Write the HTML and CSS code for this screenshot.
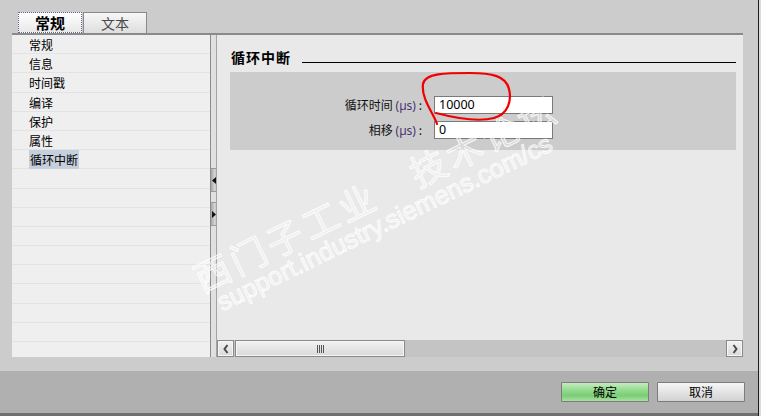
FILE: index.html
```html
<!DOCTYPE html>
<html lang="zh">
<head>
<meta charset="utf-8">
<title>循环中断</title>
<link rel="stylesheet" href="styles.css">
</head>
<body>
<div class="window">
  <div class="main">
    <div class="tabs">
      <div class="tab active"><span class="tab-label">常规</span></div>
      <div class="tab"><span class="tab-label">文本</span></div>
    </div>
    <div class="panel">
      <ul class="nav">
        <li>常规</li>
        <li>信息</li>
        <li>时间戳</li>
        <li>编译</li>
        <li>保护</li>
        <li>属性</li>
        <li class="sel"><span>循环中断</span></li>
        <li></li><li></li><li></li><li></li><li></li><li></li><li></li><li></li><li></li><li></li>
      </ul>
      <div class="splitter">
        <div class="split-btn"><svg width="4" height="7" viewBox="0 0 4 7"><path d="M4 0 L0 3.5 L4 7 Z" fill="#111"/></svg></div>
        <div class="split-btn"><svg width="4" height="7" viewBox="0 0 4 7"><path d="M0 0 L4 3.5 L0 7 Z" fill="#111"/></svg></div>
      </div>
      <div class="content">
        <div class="scroll-area">
          <div class="title-row">
            <h2 class="title">循环中断</h2>
            <div class="rule"></div>
          </div>
          <div class="box">
            <div class="form">
              <div class="label">循环时间 <span class="unit">(µs)</span> :</div>
              <div class="input">10000</div>
              <div class="label">相移 <span class="unit">(µs)</span> :</div>
              <div class="input">0</div>
            </div>
          </div>
        </div>
        <div class="hscroll">
          <div class="sb-btn"><svg width="8" height="10" viewBox="0 0 8 10"><path d="M5.5 1 L2.5 5 L5.5 9" fill="none" stroke="#4a4a4a" stroke-width="2"/></svg></div>
          <div class="thumb"><span class="grip"></span></div>
          <div class="track"></div>
          <div class="sb-btn"><svg width="8" height="10" viewBox="0 0 8 10"><path d="M2.5 1 L5.5 5 L2.5 9" fill="none" stroke="#4a4a4a" stroke-width="2"/></svg></div>
        </div>
      </div>
    </div>
  </div>
  <div class="footer">
    <button class="btn ok">确定</button>
    <button class="btn">取消</button>
  </div>
</div>

<div class="watermark">
  <div class="wm-cn">西门子工业　技术论坛</div>
  <div class="wm-url">support.industry.siemens.com/cs</div>
</div>

<svg class="annot" width="761" height="416" viewBox="0 0 761 416">
  <path d="M437 124 C434 114 421 99 423 84 C425 73 446 73 470 73 C492 73 506 76 509 89 C512 101 508 114 494 118 C479 122 455 118 436 113" fill="none" stroke="#f00000" stroke-width="2.2" stroke-linecap="round"/>
</svg>
</body>
</html>
```

FILE: styles.css
```css
html, body {
  margin: 0;
  padding: 0;
}

body {
  width: 761px;
  height: 416px;
  overflow: hidden;
  background: #dcdcdc;
  font-family: "Noto Sans CJK SC", "Noto Sans", sans-serif;
  position: relative;
}

.window {
  width: 758px;
  height: 416px;
  border-right: 1px solid #1c1c1c;
  background: #cccccc;
  display: flex;
  flex-direction: column;
}

.main {
  height: 371px;
  padding: 12px 0 0 12px;
  box-sizing: border-box;
}

.tabs {
  display: flex;
  gap: 1px;
  margin-left: 6px;
  height: 21px;
}

.tab {
  width: 64px;
  height: 21px;
  box-sizing: border-box;
  border: 1px solid #8a8a8a;
  border-bottom: none;
  background: linear-gradient(#f7f7f7, #dedede);
  display: flex;
  align-items: center;
  justify-content: center;
}

.tab-label {
  font-size: 14px;
  line-height: 16px;
  color: #4a4a4a;
}

.tab.active {
  border: 1px dotted #5e6a88;
  background: linear-gradient(#ffffff, #e8e8e8);
}

.tab.active .tab-label {
  color: #000;
  font-weight: bold;
  font-size: 15px;
}

.panel {
  width: 731px;
  height: 324px;
  box-sizing: border-box;
  border-top: 2px solid #8a8a8a;
  display: flex;
}

.nav {
  width: 198px;
  margin: 0;
  padding: 0;
  list-style: none;
  background: #efefef;
  overflow: hidden;
}

.nav li {
  height: 19.2px;
  box-sizing: border-box;
  border-bottom: 1px solid #e3e3e3;
  padding: 1px 0 0 17px;
  font-size: 12px;
  line-height: 18px;
  color: #000;
}

.nav li.sel span {
  background: #c5d0dc;
  padding: 1px 1px;
}

.splitter {
  width: 7px;
  box-sizing: border-box;
  border-left: 1px solid #8c8c8c;
  border-right: 1px solid #a4a4a4;
  background: #e0e0e0;
  display: flex;
  flex-direction: column;
  gap: 10px;
  padding-top: 133px;
}

.split-btn {
  height: 24px;
  box-sizing: border-box;
  border-top: 1px solid #9a9a9a;
  border-bottom: 1px solid #9a9a9a;
  background: linear-gradient(90deg, #a6a6a6, #d2d2d2 70%, #c8c8c8);
  display: flex;
  align-items: center;
  padding-left: 1px;
}

.split-btn svg {
  display: block;
}

.content {
  flex: 1;
  display: flex;
  flex-direction: column;
  background: #e9e9e9;
}

.scroll-area {
  flex: 1;
  padding-left: 13px;
}

.title-row {
  display: flex;
  margin-top: 12px;
  height: 20px;
}

.title {
  margin: 0 0 0 1px;
  font-size: 14px;
  line-height: 20px;
  letter-spacing: 1px;
  font-weight: bold;
  color: #000;
}

.rule {
  flex: 1;
  height: 1px;
  background: #000;
  margin: 15px 7px 0 11px;
}

.box {
  width: 506px;
  height: 78px;
  margin-top: 5px;
  background: #cccccc;
  box-sizing: border-box;
  padding-top: 24px;
}

.form {
  display: grid;
  grid-template-columns: 192px 119px;
  column-gap: 12px;
  row-gap: 6px;
}

.label {
  text-align: right;
  font-size: 12px;
  line-height: 18px;
  color: #111;
}

.unit {
  font-family: "Noto Sans", sans-serif;
  color: #4a3472;
}

.input {
  height: 18px;
  box-sizing: border-box;
  border: 1px solid #7a7a7a;
  background: #fff;
  font-family: "Noto Sans", sans-serif;
  font-size: 12.5px;
  line-height: 16px;
  padding-left: 4px;
  color: #000;
}

.hscroll {
  height: 17px;
  background: #c4c4c4;
  display: flex;
}

.sb-btn, .thumb {
  box-sizing: border-box;
  border: 1px solid #8a8a8a;
  box-shadow: inset 0 0 0 1px #f6f6f6;
  background: linear-gradient(#f2f2f2, #dadada);
  display: flex;
  align-items: center;
  justify-content: center;
}

.sb-btn {
  width: 17px;
}

.thumb {
  width: 170px;
  margin-left: 1px;
}

.grip {
  width: 7px;
  height: 8px;
  background: repeating-linear-gradient(90deg, #555 0 1px, transparent 1px 2px);
}

.track {
  flex: 1;
}

.footer {
  height: 45px;
  box-sizing: border-box;
  background: #b0b0b0;
  border-bottom: 3px solid #707070;
  display: flex;
  justify-content: flex-end;
  gap: 8px;
  padding: 11px 13px 0 0;
}

.btn {
  width: 88px;
  height: 20px;
  box-sizing: border-box;
  border: 1px solid #7c7c7c;
  border-radius: 1px;
  background: linear-gradient(#f6f6f6, #e4e4e4 50%, #d2d2d2);
  font-family: "Noto Sans CJK SC", sans-serif;
  font-size: 12px;
  line-height: 16px;
  color: #000;
  padding: 0;
}

.btn.ok {
  background: linear-gradient(#c4ecbe, #8fd889 45%, #7ccc76 70%, #a6e2a0);
}

.watermark {
  position: absolute;
  left: 187px;
  top: 262px;
  transform-origin: 0 0;
  transform: rotate(-26deg);
  pointer-events: none;
  color: rgba(255, 255, 255, 0.3);
  -webkit-text-stroke: 1px rgba(255, 255, 255, 0.85);
  white-space: nowrap;
}

.wm-cn {
  font-family: "Noto Sans CJK SC", sans-serif;
  font-size: 36px;
  line-height: 38px;
  letter-spacing: 4px;
}

.wm-url {
  font-family: "Liberation Sans", sans-serif;
  font-size: 25.5px;
  line-height: 26px;
  margin-left: 10px;
}

.annot {
  position: absolute;
  left: 0;
  top: 0;
  pointer-events: none;
}
```
